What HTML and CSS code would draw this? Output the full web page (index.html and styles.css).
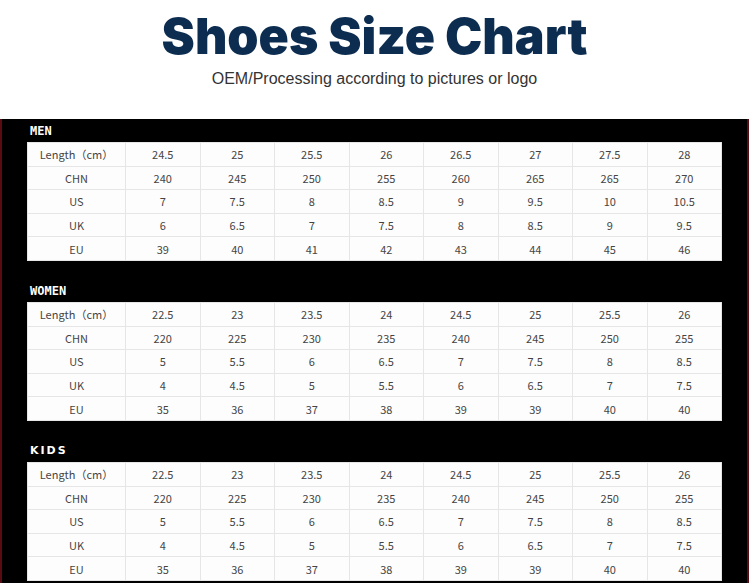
FILE: index.html
```html
<!DOCTYPE html>
<html lang="en">
<head>
<meta charset="utf-8">
<title>Shoes Size Chart</title>
<link rel="stylesheet" href="styles.css">
</head>
<body>
<header class="header">
  <h1 class="title">Shoes Size Chart</h1>
  <p class="subtitle">OEM/Processing according to pictures or logo</p>
</header>
<main class="panel">
  <section class="section">
    <h2 class="label">MEN</h2>
    <table class="chart">
      <colgroup><col class="col-head"><col><col><col><col><col><col><col><col></colgroup>
      <tr><td>Length（cm）</td><td>24.5</td><td>25</td><td>25.5</td><td>26</td><td>26.5</td><td>27</td><td>27.5</td><td>28</td></tr>
      <tr><td>CHN</td><td>240</td><td>245</td><td>250</td><td>255</td><td>260</td><td>265</td><td>265</td><td>270</td></tr>
      <tr><td>US</td><td>7</td><td>7.5</td><td>8</td><td>8.5</td><td>9</td><td>9.5</td><td>10</td><td>10.5</td></tr>
      <tr><td>UK</td><td>6</td><td>6.5</td><td>7</td><td>7.5</td><td>8</td><td>8.5</td><td>9</td><td>9.5</td></tr>
      <tr><td>EU</td><td>39</td><td>40</td><td>41</td><td>42</td><td>43</td><td>44</td><td>45</td><td>46</td></tr>
    </table>
  </section>
  <section class="section">
    <h2 class="label">WOMEN</h2>
    <table class="chart">
      <colgroup><col class="col-head"><col><col><col><col><col><col><col><col></colgroup>
      <tr><td>Length（cm）</td><td>22.5</td><td>23</td><td>23.5</td><td>24</td><td>24.5</td><td>25</td><td>25.5</td><td>26</td></tr>
      <tr><td>CHN</td><td>220</td><td>225</td><td>230</td><td>235</td><td>240</td><td>245</td><td>250</td><td>255</td></tr>
      <tr><td>US</td><td>5</td><td>5.5</td><td>6</td><td>6.5</td><td>7</td><td>7.5</td><td>8</td><td>8.5</td></tr>
      <tr><td>UK</td><td>4</td><td>4.5</td><td>5</td><td>5.5</td><td>6</td><td>6.5</td><td>7</td><td>7.5</td></tr>
      <tr><td>EU</td><td>35</td><td>36</td><td>37</td><td>38</td><td>39</td><td>39</td><td>40</td><td>40</td></tr>
    </table>
  </section>
  <section class="section">
    <h2 class="label label-kids">KIDS</h2>
    <table class="chart">
      <colgroup><col class="col-head"><col><col><col><col><col><col><col><col></colgroup>
      <tr><td>Length（cm）</td><td>22.5</td><td>23</td><td>23.5</td><td>24</td><td>24.5</td><td>25</td><td>25.5</td><td>26</td></tr>
      <tr><td>CHN</td><td>220</td><td>225</td><td>230</td><td>235</td><td>240</td><td>245</td><td>250</td><td>255</td></tr>
      <tr><td>US</td><td>5</td><td>5.5</td><td>6</td><td>6.5</td><td>7</td><td>7.5</td><td>8</td><td>8.5</td></tr>
      <tr><td>UK</td><td>4</td><td>4.5</td><td>5</td><td>5.5</td><td>6</td><td>6.5</td><td>7</td><td>7.5</td></tr>
      <tr><td>EU</td><td>35</td><td>36</td><td>37</td><td>38</td><td>39</td><td>39</td><td>40</td><td>40</td></tr>
    </table>
  </section>
</main>
</body>
</html>
```
FILE: styles.css
```css
* { box-sizing: border-box; }
html, body { margin: 0; padding: 0; background: #fff; }
body { width: 749px; overflow: hidden; }

.header {
  height: 119px;
  padding-top: 11px;
  text-align: center;
}
.title {
  margin: 0;
  font-family: Inter, "Open Sans", sans-serif;
  font-weight: 900;
  font-size: 50px;
  line-height: 1;
  color: #0c2d50;
  letter-spacing: 0;
}
.subtitle {
  margin: 9px 0 0;
  font-family: "Liberation Sans", Arial, sans-serif;
  font-size: 16px;
  line-height: 18px;
  color: #333;
}

.panel {
  background: #000;
  border-left: 2px solid #5a0b12;
  border-right: 2px solid #5a0b12;
  padding: 0 25px 20px;
  display: flex;
  flex-direction: column;
  gap: 18px;
}
.label {
  margin: 0;
  height: 23px;
  line-height: 24px;
  padding-left: 3px;
  font-family: "DejaVu Sans Mono", monospace;
  font-weight: bold;
  font-size: 12px;
  color: #fff;
}
.label-kids {
  font-family: "DejaVu Sans", sans-serif;
  font-size: 11px;
  letter-spacing: 2px;
}
.chart {
  width: 695px;
  table-layout: fixed;
  border-collapse: collapse;
  background: #fdfdfd;
}
.col-head { width: 98px; }
.chart td {
  height: 23.6px;
  padding: 0;
  border: 1px solid #e6e6e6;
  text-align: center;
  vertical-align: middle;
  font-family: "Noto Sans CJK SC", "DejaVu Sans", sans-serif;
  font-size: 11px;
  line-height: 14px;
  color: #444;
}
```
